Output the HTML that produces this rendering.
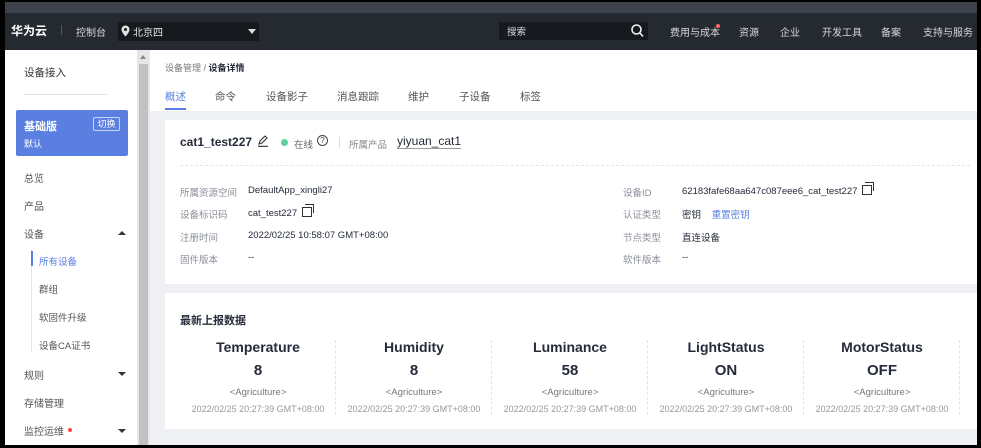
<!DOCTYPE html>
<html><head><meta charset="utf-8"><style>
*{margin:0;padding:0;box-sizing:border-box}
body{width:981px;height:448px;overflow:hidden;background:#000;font-family:"Liberation Sans","Noto Sans CJK SC",sans-serif;position:relative;font-size:10px;color:#252b3a}
.a{position:absolute;white-space:nowrap}
.top1{left:5px;top:2px;width:972px;height:11px;background:#3d424c}
.top2{left:5px;top:13px;width:972px;height:37px;background:#252a31}
.side{left:5px;top:50px;width:132px;height:395px;background:#fff}
.sb{left:137px;top:50px;width:13px;height:395px;background:#e6e6e6}
.main{left:150px;top:50px;width:827px;height:395px;background:#eff0f4}
.w{color:#d6d8dc;font-size:10px}
.si{color:#555;font-size:10px;left:24px}
.lbl{color:#8a8e99;font-size:9.5px}
.val{color:#252b3a;font-size:9.5px}
.col{position:absolute;top:339px;width:156px;text-align:center}
.col .t{font-size:14px;font-weight:bold;color:#252b3a;height:18px}
.col .v{font-size:15px;font-weight:bold;color:#252b3a;margin-top:5px;height:20px}
.col .g{font-size:9.5px;color:#777;margin-top:5px}
.col .d{font-size:9px;color:#999;margin-top:6px}
.sep{position:absolute;top:340px;height:75px;border-left:1px dashed #e2e3e6}
.cp{display:inline-block;width:10px;height:10px;border:1.5px solid #333;position:relative;vertical-align:-1px;margin-left:5px}
.cp:after{content:"";position:absolute;left:2px;top:-4px;width:8px;height:8px;border-top:1.5px solid #333;border-right:1.5px solid #333}
</style></head><body>
<div class="a top1"></div><div class="a top2"></div>
<div class="a" style="left:11px;top:22px;color:#fff;font-size:12px;font-weight:bold">华为云</div>
<div class="a" style="left:61px;top:25px;width:1px;height:10px;background:#555"></div>
<div class="a w" style="left:76px;top:24px">控制台</div>
<div class="a" style="left:118px;top:22px;width:141px;height:19px;background:#161a1f"></div>
<svg class="a" style="left:121px;top:25px" width="9" height="12" viewBox="0 0 9 12"><path d="M4.5 0.5a4 4 0 0 1 4 4c0 3-4 7-4 7s-4-4-4-7a4 4 0 0 1 4-4z" fill="#e0e0e0"/><circle cx="4.5" cy="4.5" r="1.5" fill="#161a1f"/></svg>
<div class="a w" style="left:133px;top:24px;color:#e6e6e6">北京四</div>
<div class="a" style="left:248px;top:29px;border:4px solid transparent;border-top:5px solid #ddd;border-bottom:0"></div>
<div class="a" style="left:499px;top:22px;width:149px;height:18px;background:#161a1f"></div>
<div class="a w" style="left:507px;top:24px;font-size:9.5px">搜索</div>
<svg class="a" style="left:631px;top:24px" width="13" height="14" viewBox="0 0 13 14"><circle cx="5.5" cy="5.5" r="4.5" fill="none" stroke="#eee" stroke-width="1.6"/><path d="M9 9l3 3.5" stroke="#eee" stroke-width="1.6"/></svg>
<div class="a w" style="left:670px;top:24px">费用与成本</div>
<div class="a" style="left:716px;top:24px;width:4px;height:4px;border-radius:50%;background:#f66"></div>
<div class="a w" style="left:739px;top:24px">资源</div>
<div class="a w" style="left:780px;top:24px">企业</div>
<div class="a w" style="left:822px;top:24px">开发工具</div>
<div class="a w" style="left:881px;top:24px">备案</div>
<div class="a w" style="left:923px;top:24px">支持与服务</div>

<div class="a side"></div>
<div class="a" style="left:24px;top:65px;font-size:10.5px;color:#333">设备接入</div>
<div class="a" style="left:24px;top:94px;width:84px;height:1px;background:#e5e5e5"></div>
<div class="a" style="left:16px;top:110px;width:112px;height:46px;background:#5b7fe0;border-radius:2px"></div>
<div class="a" style="left:24px;top:118px;color:#fff;font-size:11px;font-weight:bold">基础版</div>
<div class="a" style="left:24px;top:137px;color:#fff;font-size:9px">默认</div>
<div class="a" style="left:93px;top:117px;width:27px;height:14px;border:1px solid #c8d4f8;color:#fff;font-size:9px;text-align:center;line-height:12px;border-radius:2px">切换</div>
<div class="a si" style="top:170px">总览</div>
<div class="a si" style="top:198px">产品</div>
<div class="a si" style="top:226px">设备</div>
<div class="a" style="left:118px;top:231px;border:4px solid transparent;border-bottom:4px solid #333;border-top:0"></div>
<div class="a" style="left:31px;top:250px;width:1px;height:102px;background:#e5e5e5"></div>
<div class="a" style="left:31px;top:251px;width:2px;height:15px;background:#5b7fe0"></div>
<div class="a si" style="left:39px;top:254px;color:#5b7fe0;font-size:9.5px">所有设备</div>
<div class="a si" style="left:39px;top:282px;font-size:9.5px">群组</div>
<div class="a si" style="left:39px;top:310px;font-size:9.5px">软固件升级</div>
<div class="a si" style="left:39px;top:338px;font-size:9.5px">设备CA证书</div>
<div class="a si" style="top:367px">规则</div>
<div class="a" style="left:118px;top:372px;border:4px solid transparent;border-top:4px solid #333;border-bottom:0"></div>
<div class="a si" style="top:395px">存储管理</div>
<div class="a si" style="top:423px">监控运维</div>
<div class="a" style="left:68px;top:428px;width:4px;height:4px;border-radius:50%;background:#f44"></div>
<div class="a" style="left:118px;top:429px;border:4px solid transparent;border-top:4px solid #333;border-bottom:0"></div>

<div class="a sb"></div>
<div class="a" style="left:139px;top:64px;width:9px;height:381px;background:#c1c1c1"></div>
<div class="a" style="left:140px;top:55px;border:3.5px solid transparent;border-bottom:4px solid #888;border-top:0"></div>

<div class="a main"></div>
<div class="a" style="left:150px;top:50px;width:827px;height:61px;background:#fff"></div>
<div class="a" style="left:165px;top:61px;font-size:9px;color:#777">设备管理 / <b style="color:#252b3a">设备详情</b></div>
<div class="a" style="left:165px;top:89px;font-size:10.5px;color:#5b7fe0">概述</div>
<div class="a" style="left:165px;top:108px;width:21px;height:2px;background:#5b7fe0"></div>
<div class="a" style="left:215px;top:89px;font-size:10.5px;color:#555">命令</div>
<div class="a" style="left:266px;top:89px;font-size:10.5px;color:#555">设备影子</div>
<div class="a" style="left:337px;top:89px;font-size:10.5px;color:#555">消息跟踪</div>
<div class="a" style="left:408px;top:89px;font-size:10.5px;color:#555">维护</div>
<div class="a" style="left:459px;top:89px;font-size:10.5px;color:#555">子设备</div>
<div class="a" style="left:520px;top:89px;font-size:10.5px;color:#555">标签</div>

<div class="a" style="left:165px;top:120px;width:812px;height:164px;background:#fff"></div>
<div class="a" style="left:180px;top:135px;font-size:12px;font-weight:bold">cat1_test227</div>
<svg class="a" style="left:257px;top:135px" width="12" height="12" viewBox="0 0 12 12"><path d="M2 9l1-3 5-5 2 2-5 5-3 1zM1 11.3h10" fill="none" stroke="#333" stroke-width="1.1"/></svg>
<div class="a" style="left:281px;top:139px;width:7px;height:7px;border-radius:50%;background:#5bd1a0"></div>
<div class="a" style="left:294px;top:137px;font-size:9.5px;color:#666">在线</div>
<div class="a" style="left:317px;top:135px;width:11px;height:11px;border:1px solid #444;border-radius:50%;font-size:8px;text-align:center;line-height:9px;color:#444">?</div>
<div class="a" style="left:339px;top:137px;width:1px;height:11px;background:#ddd"></div>
<div class="a" style="left:349px;top:137px;font-size:9.5px;color:#888">所属产品</div>
<div class="a" style="left:397px;top:134px;font-size:12px;color:#252b3a;border-bottom:1px solid #999;line-height:14px">yiyuan_cat1</div>
<div class="a" style="left:180px;top:165px;width:790px;border-top:1px dashed #e6e6e6"></div>

<div class="a lbl" style="left:180px;top:185px">所属资源空间</div><div class="a val" style="left:248px;top:185px">DefaultApp_xingli27</div>
<div class="a lbl" style="left:180px;top:207px">设备标识码</div><div class="a val" style="left:248px;top:207px">cat_test227<span class="cp"></span></div>
<div class="a lbl" style="left:180px;top:230px">注册时间</div><div class="a val" style="left:248px;top:230px">2022/02/25 10:58:07 GMT+08:00</div>
<div class="a lbl" style="left:180px;top:252px">固件版本</div><div class="a val" style="left:248px;top:252px">--</div>
<div class="a lbl" style="left:623px;top:185px">设备ID</div><div class="a val" style="left:682px;top:185px">62183fafe68aa647c087eee6_cat_test227<span class="cp"></span></div>
<div class="a lbl" style="left:623px;top:207px">认证类型</div><div class="a val" style="left:682px;top:207px">密钥 &nbsp;&nbsp;&nbsp;<span style="color:#5b7fe0">重置密钥</span></div>
<div class="a lbl" style="left:623px;top:230px">节点类型</div><div class="a val" style="left:682px;top:230px">直连设备</div>
<div class="a lbl" style="left:623px;top:252px">软件版本</div><div class="a val" style="left:682px;top:252px">--</div>

<div class="a" style="left:165px;top:293px;width:812px;height:136px;background:#fff"></div>
<div class="a" style="left:180px;top:312px;font-size:11px;font-weight:bold">最新上报数据</div>
<div class="col" style="left:180px"><div class="t">Temperature</div><div class="v">8</div><div class="g">&lt;Agriculture&gt;</div><div class="d">2022/02/25 20:27:39 GMT+08:00</div></div>
<div class="sep" style="left:335px"></div>
<div class="col" style="left:336px"><div class="t">Humidity</div><div class="v">8</div><div class="g">&lt;Agriculture&gt;</div><div class="d">2022/02/25 20:27:39 GMT+08:00</div></div>
<div class="sep" style="left:491px"></div>
<div class="col" style="left:492px"><div class="t">Luminance</div><div class="v">58</div><div class="g">&lt;Agriculture&gt;</div><div class="d">2022/02/25 20:27:39 GMT+08:00</div></div>
<div class="sep" style="left:647px"></div>
<div class="col" style="left:648px"><div class="t">LightStatus</div><div class="v">ON</div><div class="g">&lt;Agriculture&gt;</div><div class="d">2022/02/25 20:27:39 GMT+08:00</div></div>
<div class="sep" style="left:803px"></div>
<div class="col" style="left:804px"><div class="t">MotorStatus</div><div class="v">OFF</div><div class="g">&lt;Agriculture&gt;</div><div class="d">2022/02/25 20:27:39 GMT+08:00</div></div>
<div class="sep" style="left:959px"></div>
</body></html>
